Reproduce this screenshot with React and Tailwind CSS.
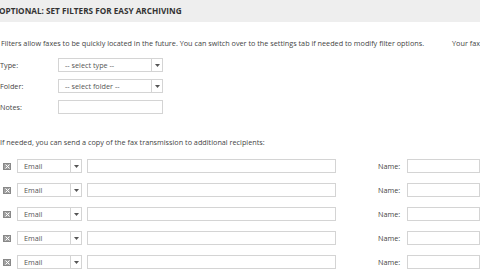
import React from "react";

const Arrow = () => (
  <span className="flex w-[11px] items-center justify-center border-l border-[#d4d4d4]">
    <svg width="5" height="3" viewBox="0 0 5 3">
      <path d="M0 0 L5 0 L2.5 3 Z" fill="#555" />
    </svg>
  </span>
);

const Select = ({ label, width }) => (
  <div className={`flex h-[14px] ${width} border border-[#d4d4d4] bg-white`}>
    <span className="flex-1 whitespace-nowrap pl-[6px] leading-[12px] text-[#555]">{label}</span>
    <Arrow />
  </div>
);

const RemoveBox = () => (
  <span className="flex h-[7px] w-[8px] items-center justify-center border border-[#888] bg-[#a0a0a0]">
    <svg width="5" height="5" viewBox="0 0 5 5">
      <path d="M0.5 0.5 L4.5 4.5 M4.5 0.5 L0.5 4.5" stroke="#fff" strokeWidth="1" />
    </svg>
  </span>
);

const App = () => {
  const rows = [0, 1, 2, 3, 4];

  return (
    <div
      className="h-[270px] w-[480px] overflow-hidden bg-white text-[7.25px] text-[#444]"
      style={{ fontFamily: "'Open Sans', sans-serif" }}
    >
      {/* Header */}
      <div className="flex h-[22px] items-center bg-[#eeeeee]">
        <h2 className="-ml-[1px] whitespace-nowrap text-[8.2px] font-bold text-[#333]">
          OPTIONAL: SET FILTERS FOR EASY ARCHIVING
        </h2>
      </div>

      {/* Intro */}
      <div className="mt-[16px] flex h-[10px] items-center whitespace-nowrap">
        <p className="w-[456px] pl-[1px]">
          Filters allow faxes to be quickly located in the future. You can switch over to the settings tab if needed to modify filter options.
        </p>
        <p>Your fax</p>
      </div>

      {/* Filter form */}
      <div className="mt-[10px] flex flex-col gap-[7px]">
        <div className="flex items-center">
          <span className="w-[58px]">Type:</span>
          <Select label="-- select type --" width="w-[105px]" />
        </div>
        <div className="flex items-center">
          <span className="w-[58px]">Folder:</span>
          <Select label="-- select folder --" width="w-[105px]" />
        </div>
        <div className="flex items-center">
          <span className="w-[58px]">Notes:</span>
          <div className="h-[14px] w-[105px] border border-[#d4d4d4] bg-white" />
        </div>
      </div>

      <p className="mt-[23px] h-[10px] whitespace-nowrap leading-[10px]">
        If needed, you can send a copy of the fax transmission to additional recipients:
      </p>

      {/* Recipients */}
      <div className="mt-[12px] flex flex-col gap-[10px]">
        {rows.map((r) => (
          <div key={r} className="flex h-[14px] items-center">
            <span className="flex w-[17px] pl-[3px]">
              <RemoveBox />
            </span>
            <Select label="Email" width="w-[65px]" />
            <div className="ml-[5px] h-[14px] w-[249px] border border-[#d4d4d4] bg-white" />
            <span className="ml-[42px] w-[29px]">Name:</span>
            <div className="h-[14px] flex-1 border border-[#d4d4d4] bg-white" />
          </div>
        ))}
      </div>
    </div>
  );
};

export default App;
